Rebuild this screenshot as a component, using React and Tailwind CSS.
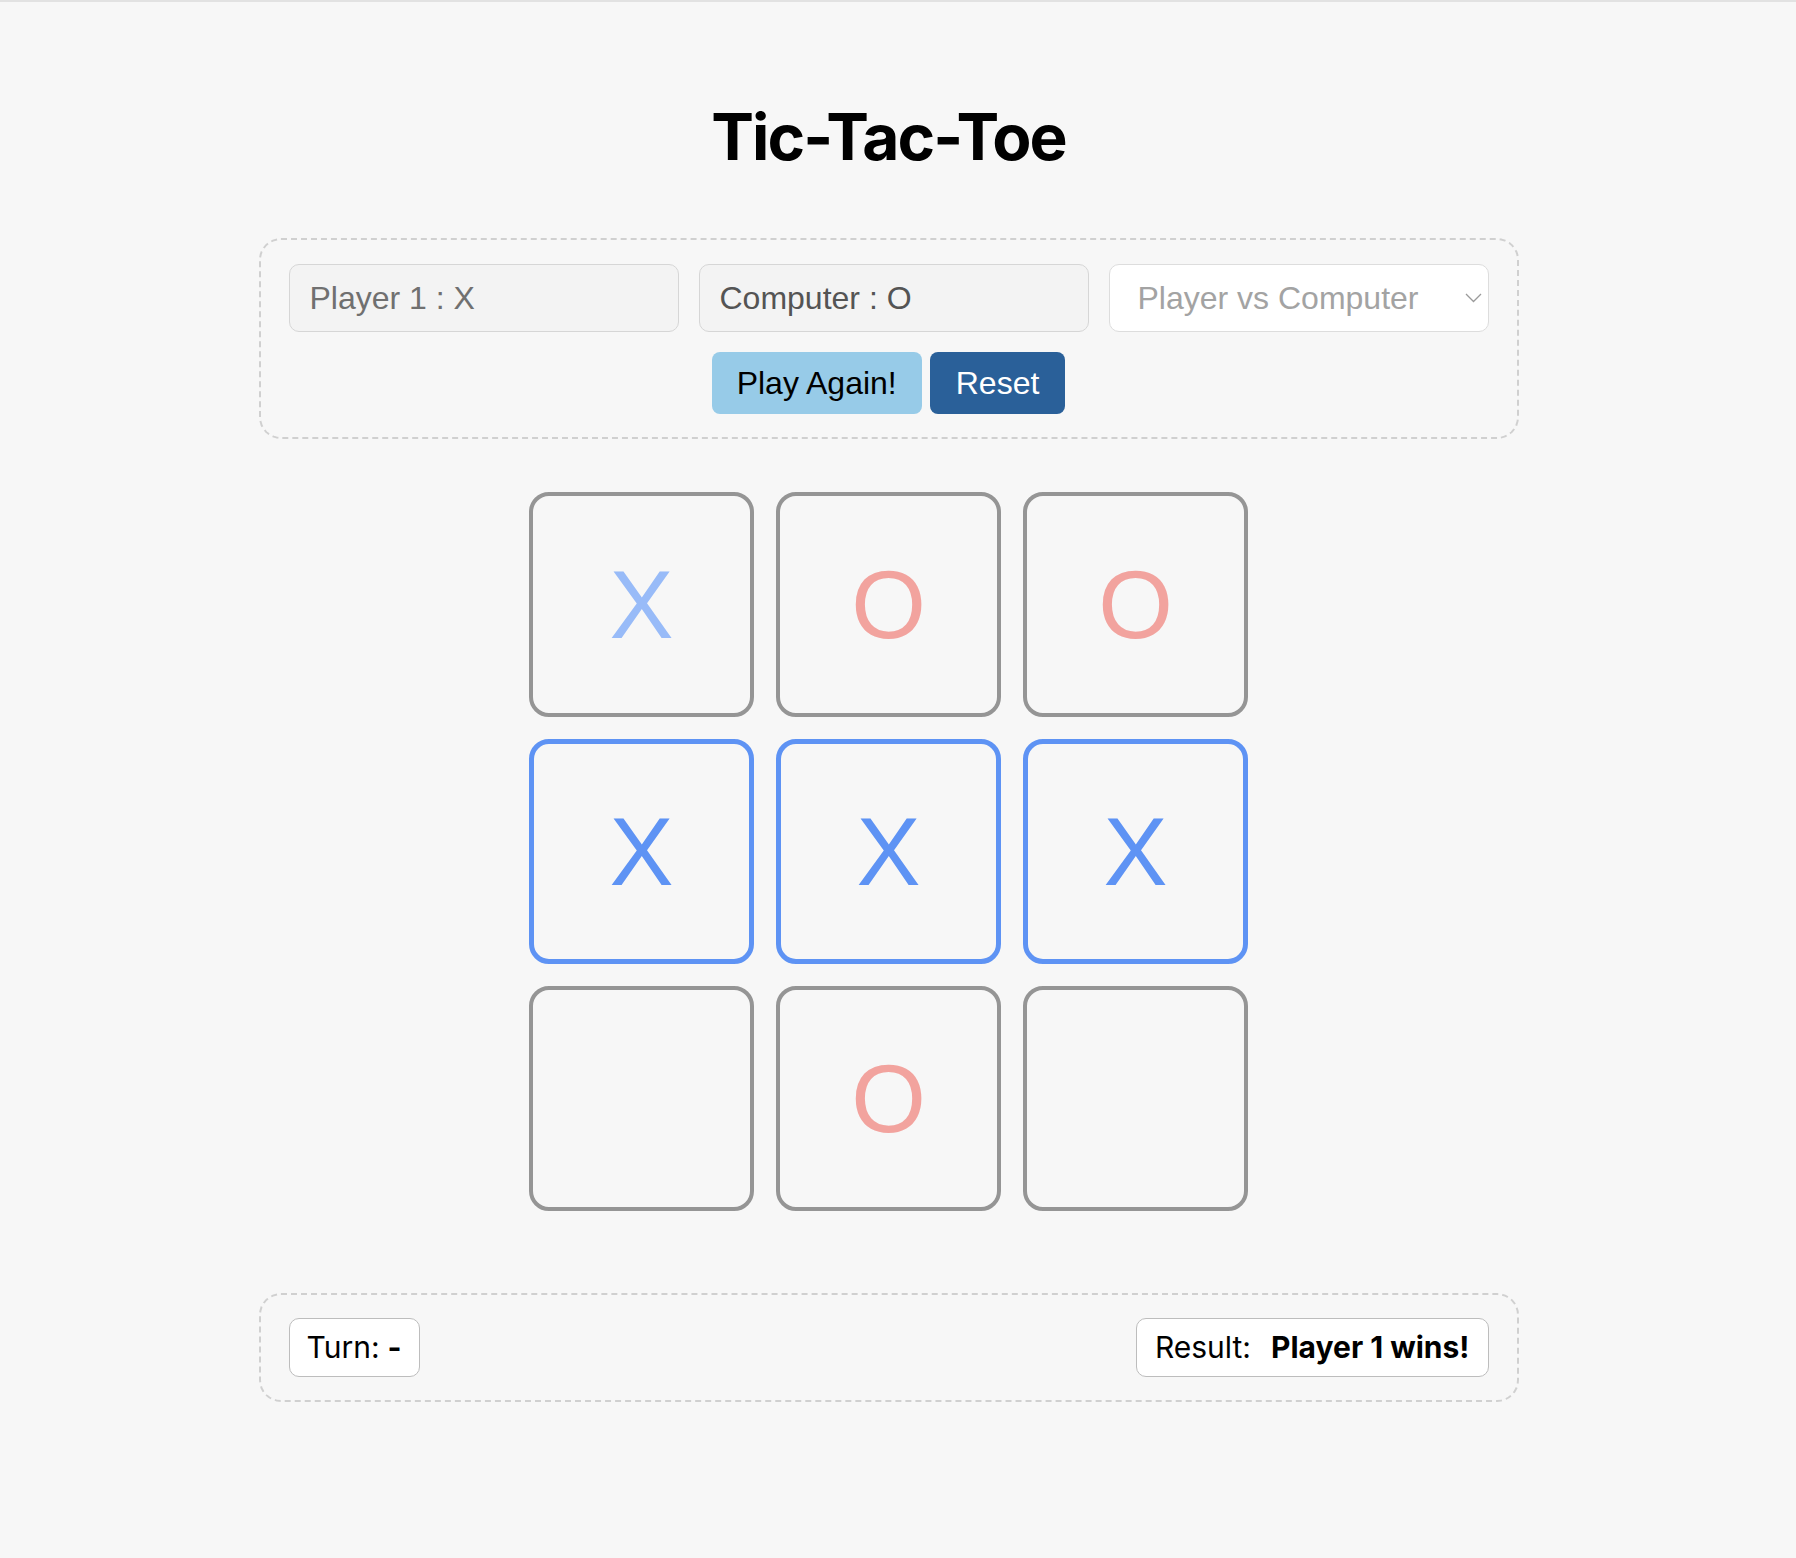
import { useState } from 'react';

const startBoard = ['X', 'O', 'O', 'X', 'X', 'X', '', 'O', ''];
const winLine = [3, 4, 5];

function Cell({ value, winning }) {
    const border = winning
        ? 'border-[5px] border-[#5e93f4]'
        : 'border-4 border-[#959595]';
    let color = 'text-[#f2a39e]';
    if (value === 'X') color = winning ? 'text-[#5e93f4]' : 'text-[#98bbf8]';

    return (
        <button
            className={`w-[225px] h-[225px] rounded-[20px] flex items-center justify-center bg-transparent ${border}`}
        >
            <span className={`font-['Liberation_Sans',Arial,sans-serif] text-[96px] leading-none ${color}`}>
                {value}
            </span>
        </button>
    );
}

export default function App() {
    const [board] = useState(startBoard);

    return (
        <div className="min-h-screen bg-[#f7f7f7] border-t-2 border-[#e2e2e2]">
            <div className="flex flex-col items-center pt-[96px] pb-20 pr-[19px]">
                <h1 className="font-['Inter',sans-serif] font-bold text-[64px] leading-[77px] tracking-[-0.03em] text-black">
                    Tic-Tac-Toe
                </h1>

                {/* Settings panel */}
                <div className="mt-[63px] w-[1260px] border-2 border-dashed border-[#d0d0d0] rounded-[22px] px-[28px] pt-[24px] pb-[23px] font-['Liberation_Sans',Arial,sans-serif]">
                    <div className="flex gap-[20px]">
                        <input
                            readOnly
                            value="Player 1 : X"
                            className="w-[390px] h-[68px] px-[20px] rounded-[10px] border border-[#d6d6d6] bg-[#f3f3f3] text-[32px] text-[#707070] outline-none"
                        />
                        <input
                            readOnly
                            value="Computer : O"
                            className="w-[390px] h-[68px] px-[20px] rounded-[10px] border border-[#d6d6d6] bg-[#f3f3f3] text-[32px] text-[#545454] outline-none"
                        />
                        <div className="relative w-[380px]">
                            <select
                                defaultValue="pvc"
                                className="w-full h-[68px] pl-[28px] pr-12 rounded-[10px] border border-[#dddddd] bg-white text-[32px] text-[#a3a3a3] appearance-none outline-none"
                            >
                                <option value="pvc">Player vs Computer</option>
                                <option value="pvp">Player vs Player</option>
                            </select>
                            <svg
                                className="absolute right-[7px] top-[29px] pointer-events-none"
                                width="17"
                                height="10"
                                viewBox="0 0 17 10"
                                fill="none"
                            >
                                <path d="M1 1l7.5 7.5L16 1" stroke="#9a9a9a" strokeWidth="1.3" />
                            </svg>
                        </div>
                    </div>
                    <div className="flex justify-center gap-[8px] mt-[20px]">
                        <button className="h-[62px] px-[25px] rounded-[8px] bg-[#97cbe8] text-[32px] text-black">
                            Play Again!
                        </button>
                        <button className="h-[62px] px-[26px] rounded-[8px] bg-[#2a6099] text-[32px] text-white">
                            Reset
                        </button>
                    </div>
                </div>

                {/* Board */}
                <div className="mt-[53px] grid grid-cols-[repeat(3,225px)] gap-[22px]">
                    {board.map((v, i) => (
                        <Cell key={i} value={v} winning={winLine.includes(i)} />
                    ))}
                </div>

                {/* Status */}
                <div className="mt-[82px] w-[1260px] border-2 border-dashed border-[#d0d0d0] rounded-[22px] px-[28px] py-[23px] flex justify-between font-['Inter',sans-serif] text-[30px] text-black">
                    <div className="h-[59px] px-[17px] flex items-center bg-white border border-[#bdbdbd] rounded-[10px]">
                        Turn:<span className="font-bold ml-[8px]">-</span>
                    </div>
                    <div className="h-[59px] px-[18px] flex items-center bg-white border border-[#bdbdbd] rounded-[10px]">
                        Result:<span className="font-bold ml-[20px]">Player 1 wins!</span>
                    </div>
                </div>
            </div>
        </div>
    );
}
